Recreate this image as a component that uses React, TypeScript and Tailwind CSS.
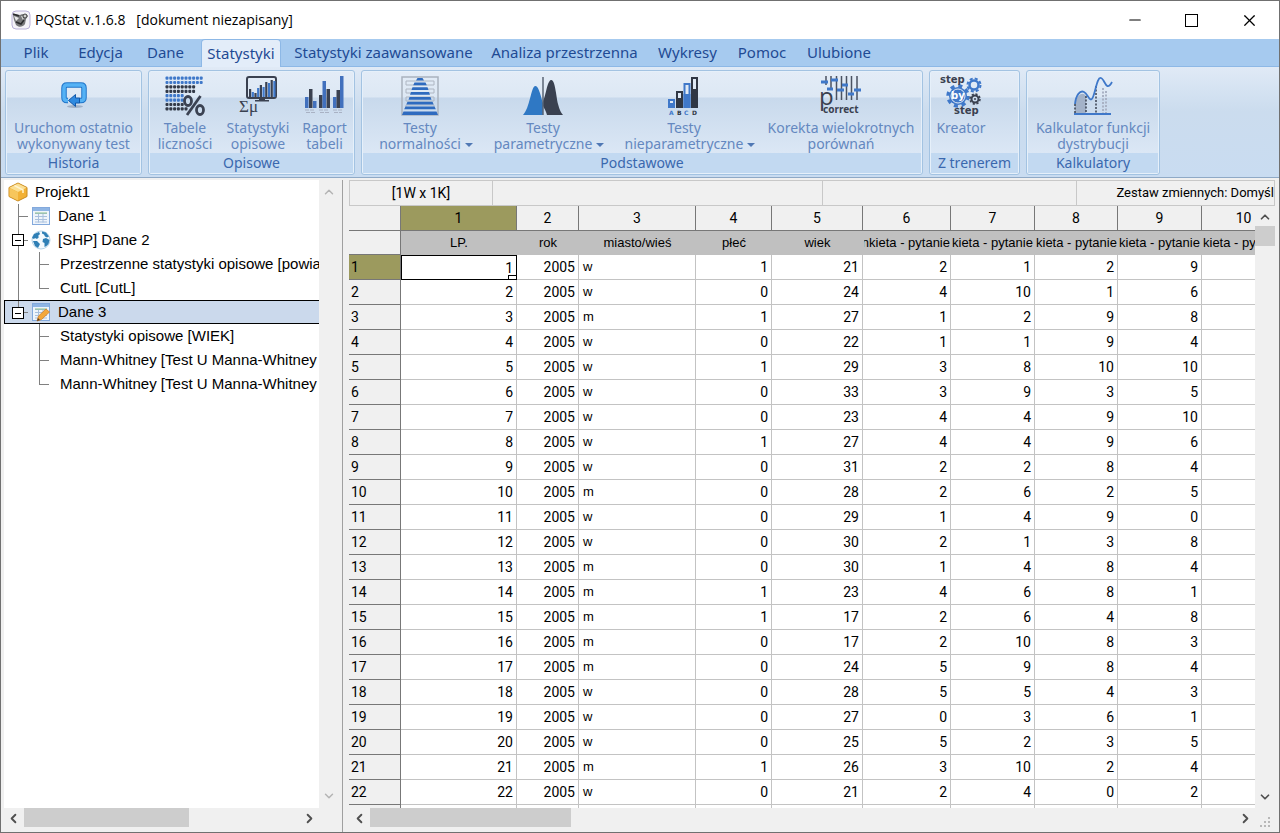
import { Fragment, type ReactNode } from 'react'
import { ChevronDown, ChevronLeft, ChevronRight, ChevronUp, Minus, X } from 'lucide-react'

const tabs = [
  { label: 'Plik', width: 'min-w-16' },
  { label: 'Edycja', width: 'min-w-[65px]' },
  { label: 'Dane', width: 'min-w-[65px]' },
  { label: 'Statystyki', width: 'min-w-20' },
  { label: 'Statystyki zaawansowane', width: 'min-w-[197px]' },
  { label: 'Analiza przestrzenna', width: 'min-w-[165px]' },
  { label: 'Wykresy', width: 'min-w-[81px]' },
  { label: 'Pomoc', width: 'min-w-[68px]' },
  { label: 'Ulubione', width: 'min-w-[86px]' },
]

const names = ['LP.', 'rok', 'miasto/wieś', 'płeć', 'wiek', 'nkieta - pytanie', 'kieta - pytanie', 'kieta - pytanie', 'kieta - pytanie', 'kieta - pytanie']

// miasto/wieś, płeć, wiek, pytania 1-4
const data: [string, number, number, number, number, number, number][] = [
  ['w', 1, 21, 2, 1, 2, 9],
  ['w', 0, 24, 4, 10, 1, 6],
  ['m', 1, 27, 1, 2, 9, 8],
  ['w', 0, 22, 1, 1, 9, 4],
  ['w', 1, 29, 3, 8, 10, 10],
  ['w', 0, 33, 3, 9, 3, 5],
  ['w', 0, 23, 4, 4, 9, 10],
  ['w', 1, 27, 4, 4, 9, 6],
  ['w', 0, 31, 2, 2, 8, 4],
  ['m', 0, 28, 2, 6, 2, 5],
  ['w', 0, 29, 1, 4, 9, 0],
  ['w', 0, 30, 2, 1, 3, 8],
  ['m', 0, 30, 1, 4, 8, 4],
  ['m', 1, 23, 4, 6, 8, 1],
  ['m', 1, 17, 2, 6, 4, 8],
  ['m', 0, 17, 2, 10, 8, 3],
  ['m', 0, 24, 5, 9, 8, 4],
  ['w', 0, 28, 5, 5, 4, 3],
  ['w', 0, 27, 0, 3, 6, 1],
  ['w', 0, 25, 5, 2, 3, 5],
  ['m', 1, 26, 3, 10, 2, 4],
  ['w', 0, 21, 2, 4, 0, 2],
]

/* ---------- icons ---------- */

function AppIcon() {
  return (
    <svg width="20" height="20" viewBox="0 0 20 20">
      <rect x="1" y="1" width="18" height="18" rx="4" fill="#f4f2f8" stroke="#b9b0d8" />
      <path d="M2 5c3-2 5 0 7 0 3-2 6-1 8 1l-2 3-1 5c-2 3-6 4-9 1L3 10z" fill="#77777a" />
      <path d="M3 6l5 2-3 3zM10 6l4 1-2 3z" fill="#e8e8e8" />
      <path d="M2 4l6 2M5 12l5 2 3-4M12 8l4-3" stroke="#2b2b2e" strokeWidth="1.5" fill="none" />
      <circle cx="14" cy="6" r="2" fill="#cfcfcf" stroke="#444" />
    </svg>
  )
}

function RepeatIcon() {
  return (
    <svg width="40" height="40" viewBox="0 0 40 40">
      <ellipse cx="21" cy="30.500" rx="8" ry="1.500" fill="#9fb0c6" />
      <path d="M14 24.500h-1q-3 0-3-3V12q0-3 3-3h14q3 0 3 3v9.500q0 3-3 3h-2" fill="none" stroke="#1f74c9" strokeWidth="5.500" />
      <path d="M14 24.500h-1q-3 0-3-3V12q0-3 3-3h14q3 0 3 3v9.500q0 3-3 3h-2" fill="none" stroke="#55b2f5" strokeWidth="3.500" />
      <path d="M14.500 24.500l7-6v3.500h4v5h-4v3.500z" fill="#2f8ae0" stroke="#1258aa" />
    </svg>
  )
}

function FrequencyIcon() {
  const rows = [
    [0, 10, '#3f78c9'], [1, 10, '#3f78c9'], [2, 8, '#333a48'], [3, 8, '#333a48'],
    [4, 5, '#3f78c9'], [5, 5, '#3f78c9'], [6, 5, '#333a48'], [7, 6, '#333a48'],
  ] as const
  return (
    <svg width="40" height="40" viewBox="0 0 40 40">
      {rows.map(([r, n, color]) =>
        Array.from({ length: n }, (_, i) => (
          <rect key={`${r}-${i}`} x={i * 3.8 + 0.5} y={r * 4.4 + 0.5} width="3" height="3.200" rx="1" fill={color} />
        )),
      )}
      <g fill="none" stroke="#3b4252" strokeWidth="2.800">
        <ellipse cx="23" cy="25" rx="3.500" ry="4.500" />
        <ellipse cx="35" cy="34" rx="3.500" ry="4.500" />
        <path d="M35.500 20L22 39" />
      </g>
    </svg>
  )
}

function DescriptiveIcon() {
  return (
    <svg width="40" height="40" viewBox="0 0 40 40">
      <rect x="9" y="1" width="29" height="21" rx="2" fill="none" stroke="#3a4150" strokeWidth="2" />
      {[8, 5, 4, 9, 12, 10, 15, 14, 17, 16].map((h, i) => (
        <rect key={i} x={11 + i * 2.7} y={21 - h} width="2.200" height={h} fill={i % 2 ? '#3f78c9' : '#3a4150'} />
      ))}
      <path d="M21 22h6v2h4v1.500H17V24h4z" fill="#3a4150" />
      <text x="1" y="36" fontFamily="Liberation Serif, serif" fontSize="17" fill="#3a4150">Σμ</text>
    </svg>
  )
}

function ReportIcon() {
  const bars = [[0, 11, 1], [4, 19, 0], [8, 7, 1], [14, 13, 0], [17.5, 27, 1], [21.5, 19, 0], [28, 11, 1], [31.5, 18, 0], [35, 32, 1]]
  return (
    <svg width="40" height="40" viewBox="0 0 40 40">
      {bars.map(([x, h, blue]) => (
        <rect key={x} x={x} y={32 - h} width="3.500" height={h} fill={blue ? '#4170bd' : '#3a4150'} />
      ))}
      <path d="M0 34h10M14 34h10M28 34h10M1 36.500h10M15 36.500h9M29 36.500h8" stroke="#a9b2c4" strokeDasharray="4 1" />
    </svg>
  )
}

function NormalityIcon() {
  return (
    <svg width="40" height="40" viewBox="0 0 40 40">
      <rect x="2" y="1" width="36" height="38" fill="none" stroke="#a9b2be" strokeWidth="1.500" />
      <path d="M6 5h28v4H6zM6 13h28v4H6zM6 21h28v4H6zM6 29h28v3H6z" fill="none" stroke="#aeb6c2" />
      <g fill="#2f6bbf">
        <path d="M17.500 2h5l1.500 2.500h-8zM14.500 6.500h11l1.300 2.800H13.200zM12.500 11.200h15l1 2.800H11.500zM11 16h18l1 2.800H10zM9.500 21h21l1 2.800H8.500zM7.500 25.700h25l1.200 2.800H6.300zM5.500 30.500h29l1.300 2.800H4.200zM3.500 35.500h33l1.500 3.500H2z" />
      </g>
    </svg>
  )
}

function ParametricIcon() {
  return (
    <svg width="40" height="40" viewBox="0 0 40 40">
      <path d="M0 39C7 32 8 11 12 10s6 12 8 17v12z" fill="#2f78c4" />
      <path d="M20 25c3-5 4-20 8-21s5 15 7 24q2 8 5 11H24c-1-4-3-7-4-9z" fill="#3a4150" />
      <path d="M20 1v38" stroke="#5a6475" strokeWidth="1.500" />
    </svg>
  )
}

function NonparametricIcon() {
  return (
    <svg width="40" height="40" viewBox="0 0 40 40">
      <rect x="5" y="24" width="5" height="7" fill="#dfe9f5" stroke="#3f78c9" strokeWidth="2" />
      <path d="M4 27h7v5H4z" fill="#3f78c9" />
      <rect x="13" y="16" width="5" height="15" fill="#dfe9f5" stroke="#303744" strokeWidth="2" />
      <path d="M12 22h7v10h-7z" fill="#303744" />
      <rect x="20.500" y="8" width="5" height="23" fill="#dfe9f5" stroke="#3f78c9" strokeWidth="2" />
      <path d="M19.500 18h7v14h-7z" fill="#3f78c9" />
      <rect x="28" y="2" width="5" height="29" fill="#dfe9f5" stroke="#303744" strokeWidth="2" />
      <path d="M27 13h7v19h-7z" fill="#303744" />
      <g fontFamily="DejaVu Sans, sans-serif" fontSize="6" fontWeight="bold">
        <text x="5" y="38.500" fill="#3f78c9">A</text>
        <text x="13" y="38.500" fill="#303744">B</text>
        <text x="20" y="38.500" fill="#3f78c9">C</text>
        <text x="28" y="38.500" fill="#303744">D</text>
      </g>
    </svg>
  )
}

function CorrectIcon() {
  return (
    <svg width="42" height="40" viewBox="0 0 42 40">
      <path d="M6 0v9M11 0v14M16.500 0v24M21.500 0v24M26.500 0v24M31.500 0v24M37 0v24" stroke="#4a5262" strokeWidth="1.500" />
      <path d="M1 6h7M7 13h6M11 4h7M17 14h7M22 9h6M28 18h6M34 14h7" stroke="#3f78c9" strokeWidth="3" />
      <text x="-1" y="29" fontFamily="Open Sans, sans-serif" fontSize="24" fill="#3a4150">p</text>
      <text x="3" y="37" fontFamily="Noto Sans, sans-serif" fontSize="10" fontWeight="bold" fill="#3a4150">correct</text>
    </svg>
  )
}

function StepIcon() {
  return (
    <svg width="46" height="42" viewBox="0 0 46 42">
      <g fill="none">
        <circle cx="20" cy="21" r="10" stroke="#3f78c9" strokeWidth="3.500" strokeDasharray="4 3.850" />
        <circle cx="20" cy="21" r="9" fill="#3f78c9" />
        <circle cx="20" cy="21" r="7" stroke="#dfe9f5" />
        <circle cx="36" cy="10" r="6.500" stroke="#3f78c9" strokeWidth="2" strokeDasharray="3 2.100" />
        <circle cx="36" cy="10" r="4.500" stroke="#3f78c9" strokeWidth="2.500" />
        <circle cx="37" cy="24" r="5" stroke="#3a4150" strokeWidth="1.500" strokeDasharray="2.200 1.700" />
        <circle cx="37" cy="24" r="3.500" stroke="#3a4150" strokeWidth="2" />
        <circle cx="37" cy="24" r="1" fill="#3a4150" />
      </g>
      <g fontFamily="DejaVu Sans, sans-serif" fontWeight="bold">
        <text x="2" y="8" fontSize="10" fill="#3a4150">step</text>
        <text x="13" y="24" fontSize="10" fill="#ffffff">by</text>
        <text x="16" y="39" fontSize="10" fill="#3a4150">step</text>
      </g>
    </svg>
  )
}

function DistributionIcon() {
  return (
    <svg width="40" height="40" viewBox="0 0 40 40">
      <path d="M2 37V26q4-10 9-8l2 2v17z" fill="#a3b2c8" />
      <path d="M2 28v9M13 20v17M23 10v27" stroke="#3a4150" strokeWidth="1.500" strokeDasharray="2 1.500" />
      <path d="M30 12v25M33 15v22" stroke="#a9b2c4" strokeWidth="2" strokeDasharray="2 1.500" />
      <path d="M2 28C3 19 7 14 11 16s6 12 9 5 4-20 8-19 5 15 11 4" fill="none" stroke="#3f78c9" strokeWidth="1.800" />
      <path d="M1 38h37" stroke="#3f78c9" strokeWidth="2" />
    </svg>
  )
}

function BoxIcon() {
  return (
    <svg width="20" height="20" viewBox="0 0 20 20">
      <path d="M10 1l9 4.500v9L10 19l-9-4.500v-9z" fill="#f2b136" stroke="#c98a1e" />
      <path d="M10 1.500l8.500 4.200L10 10 1.500 5.700z" fill="#fbdf93" />
      <path d="M1.500 6L10 10.200V18.500L1.500 14.200z" fill="#f7c65c" />
      <path d="M6.500 3.500L15 8v3" stroke="#fff3cd" strokeWidth="1.500" fill="none" />
    </svg>
  )
}

function SheetIcon({ pencil }: { pencil?: boolean }) {
  return (
    <svg width="18" height="20" viewBox="0 0 18 20">
      <rect x=".5" y="1.500" width="17" height="17" fill="#eef4fb" stroke="#83a9dc" />
      <path d="M1 2h16v3H1z" fill="#8fb5e4" />
      <path d="M3 7.500h12M3 10.500h12M3 13.500h12M3 16h12M6.500 7v9.500M11 7v9.500" stroke="#a9c0dd" />
      <path d="M3 7h12" stroke="#8cc08a" />
      {pencil && (
        <>
          <path d="M5 19l1.500-5L14 7l3.500 3-8 7.500z" fill="#f3a73b" stroke="#cf7f2b" strokeWidth=".8" />
          <path d="M5 19l1-3 2 2z" fill="#5b4430" />
        </>
      )}
    </svg>
  )
}

function GlobeIcon() {
  return (
    <svg width="20" height="20" viewBox="0 0 20 20">
      <circle cx="10" cy="10" r="9" fill="#f3f9fd" stroke="#b5d3e8" />
      <path d="M3 4l5-2 1 2-2 2 1 1-2 2-2-1-1 1-2-1zM11 1.500l4 1 3 4-2 1-2-1-1-2-2-1zM12 9l3-1 3.500 2-1 4-2 2-2 1v-4l-2-1zM2 11l4 0 3 3-1 2-1 2-3-2z" fill="#2f7fb5" />
    </svg>
  )
}

/* ---------- ribbon ---------- */

function Group({ label, className, children }: { label: string; className: string; children: ReactNode }) {
  return (
    <section className={`flex h-[105px] shrink-0 flex-col rounded-[3px] border border-[#a3c3e2] bg-[linear-gradient(#e3ecf7_0,#dde8f4_26px,#c8d9ec_27px,#dbe7f5_82px)] shadow-[inset_0_0_0_1px_#e6f0fa] ${className}`}>
      <div className="flex flex-1">{children}</div>
      <h2 className="m-px h-5 bg-[#c2d9f1] text-center leading-5 text-[#3a68ae]">{label}</h2>
    </section>
  )
}

function Tool({ icon, lines, menu, className }: { icon: ReactNode; lines: string[]; menu?: boolean; className: string }) {
  return (
    <button type="button" className={`flex flex-col items-center pt-[5px] leading-4 whitespace-nowrap text-[#6488c0] ${className}`}>
      <span className="mb-1 flex h-10 items-center justify-center">{icon}</span>
      <span>
        {lines.map((line, i) => (
          <Fragment key={line}>
            {i > 0 && <br />}
            {line}
          </Fragment>
        ))}
        {menu && <span className="-mr-3 ml-1 inline-block border-x-4 border-t-4 border-x-transparent border-t-[#5078b4] align-middle" />}
      </span>
    </button>
  )
}

function Ribbon() {
  return (
    <div className="flex h-[111px] gap-[6px] border-b border-[#8fa9c6] bg-[linear-gradient(#e0eaf6,#cbdcee_40%,#c9dcf1)] px-1 pt-[3px] text-sm">
      <Group label="Historia" className="w-[137px]">
        <Tool icon={<RepeatIcon />} lines={['Uruchom ostatnio', 'wykonywany test']} className="w-full" />
      </Group>
      <Group label="Opisowe" className="w-[207px]">
        <Tool icon={<FrequencyIcon />} lines={['Tabele', 'liczności']} className="w-[72px]" />
        <Tool icon={<DescriptiveIcon />} lines={['Statystyki', 'opisowe']} className="w-[74px]" />
        <Tool icon={<ReportIcon />} lines={['Raport', 'tabeli']} className="w-[59px]" />
      </Group>
      <Group label="Podstawowe" className="w-[562px]">
        <Tool icon={<NormalityIcon />} lines={['Testy', 'normalności']} menu className="w-[116px]" />
        <Tool icon={<ParametricIcon />} lines={['Testy', 'parametryczne']} menu className="w-[130px]" />
        <Tool icon={<NonparametricIcon />} lines={['Testy', 'nieparametryczne']} menu className="w-[152px]" />
        <Tool icon={<CorrectIcon />} lines={['Korekta wielokrotnych', 'porównań']} className="w-[162px]" />
      </Group>
      <Group label="Z trenerem" className="w-[91px]">
        <Tool icon={<StepIcon />} lines={['Kreator']} className="w-[62px]" />
      </Group>
      <Group label="Kalkulatory" className="w-[134px]">
        <Tool icon={<DistributionIcon />} lines={['Kalkulator funkcji', 'dystrybucji']} className="w-full" />
      </Group>
    </div>
  )
}

/* ---------- project tree ---------- */

// Connector: vertical line with an optional branch to the right
function Guide({ branch, last, box }: { branch?: boolean; last?: boolean; box?: boolean }) {
  return (
    <span className="relative flex w-[10px] shrink-0 flex-col self-stretch">
      <span className={`flex-1 border-l border-[#808080] ${branch ? 'border-b' : ''}`} />
      <span className={`flex-1 ${last ? '' : 'border-l border-[#808080]'}`} />
      {box && (
        <button type="button" aria-label="Zwiń" className="absolute top-[6px] -left-[6px] flex size-3 items-center justify-center border border-black bg-white">
          <span className="h-px w-[6px] bg-black" />
        </button>
      )}
    </span>
  )
}

function Leaf({ text, last, outer }: { text: string; last?: boolean; outer?: boolean }) {
  return (
    <li className="flex h-6 items-center whitespace-nowrap">
      <span className={`ml-[14px] w-[21px] shrink-0 self-stretch ${outer ? 'border-l border-[#808080]' : ''}`} />
      <Guide branch last={last} />
      <span className="pl-[11px]">{text}</span>
    </li>
  )
}

function Tree() {
  return (
    <ul className="min-w-0 flex-1 overflow-hidden bg-white text-[15px] text-black">
      <li className="flex h-6 items-center gap-[7px] pl-1">
        <BoxIcon />
        Projekt1
      </li>
      <li className="flex h-6 items-center pl-[14px]">
        <Guide branch />
        <span className="mr-2 ml-1"><SheetIcon /></span>
        Dane 1
      </li>
      <li className="flex h-6 items-center pl-[14px]">
        <Guide branch box />
        <span className="mr-[7px] ml-[3px]"><GlobeIcon /></span>
        [SHP] Dane 2
      </li>
      <Leaf text="Przestrzenne statystyki opisowe [powia" outer />
      <Leaf text="CutL [CutL]" last outer />
      <li className="flex h-6 items-center border-y border-l border-black bg-[#cbd9ec] pl-[13px]">
        <Guide branch last box />
        <span className="mr-2 ml-1"><SheetIcon pencil /></span>
        Dane 3
      </li>
      <Leaf text="Statystyki opisowe [WIEK]" />
      <Leaf text="Mann-Whitney [Test U Manna-Whitney" />
      <Leaf text="Mann-Whitney [Test U Manna-Whitney" last />
    </ul>
  )
}

function HScroll({ thumb, className }: { thumb: string; className: string }) {
  return (
    <div className={`flex h-5 items-center bg-[#f0f0f0] text-[#505050] ${className}`}>
      <button type="button" aria-label="W lewo" className="flex w-[21px] justify-center"><ChevronLeft size={15} strokeWidth={3} /></button>
      <div className="h-full flex-1"><div className={`h-[19px] bg-[#cdcdcd] ${thumb}`} /></div>
      <button type="button" aria-label="W prawo" className="flex w-5 justify-center"><ChevronRight size={15} strokeWidth={3} /></button>
    </div>
  )
}

/* ---------- data grid ---------- */

function Grid() {
  const cell = 'border-r border-b border-[#c3c3c3] bg-white px-[3px] text-right'
  const rowHead = 'border-r border-b border-[#777777] bg-[#f0f0f0] pl-[2px] text-left align-top leading-6 font-normal'
  return (
    <div className="min-h-0 min-w-0 flex-1 overflow-hidden bg-white">
      <table className="w-[937px] table-fixed border-separate border-spacing-0 text-sm text-black">
        <colgroup>
          <col className="w-[52px]" />
          <col className="w-[116px]" />
          <col className="w-[62px]" />
          <col className="w-[117px]" />
          <col className="w-[76px]" />
          <col className="w-[91px]" />
          <col className="w-[88px]" />
          <col className="w-[84px]" />
          <col className="w-[83px]" />
          <col className="w-[84px]" />
          <col className="w-[84px]" />
        </colgroup>
        <thead>
          <tr className="h-[25px]">
            <td className="border-r border-b border-[#777777] bg-[#f0f0f0]" />
            {names.map((_, i) => (
              <th key={i} scope="col" className={`border-r border-b border-[#777777] font-normal ${i === 0 ? 'bg-[#9c9a5e]' : 'bg-[#f0f0f0]'}`}>
                {i + 1}
              </th>
            ))}
          </tr>
          <tr className="h-6 font-['Liberation_Sans',Arial,sans-serif] text-[13px]">
            <td className="border-r border-b border-[#777777] bg-[#f0f0f0]" />
            {names.map((name, i) => (
              <th key={i} scope="col" className="bg-[#c0c0c0] px-px font-normal">
                <div className={`flex overflow-hidden whitespace-nowrap ${i < 5 ? 'justify-center' : i === 5 ? 'justify-end' : ''}`}>{name}</div>
              </th>
            ))}
          </tr>
        </thead>
        <tbody>
          {data.map(([place, ...values], r) => (
            <tr key={r} className="h-[25px]">
              <th scope="row" className={`${rowHead} ${r === 0 ? 'bg-[#9c9a5e]!' : ''}`}>{r + 1}</th>
              {r === 0 ? (
                <td className="relative border border-black bg-white px-[3px] text-right">
                  1
                  <span className="absolute right-0 bottom-0 h-1 w-2 border-t border-l border-black bg-white" />
                </td>
              ) : (
                <td className={cell}>{r + 1}</td>
              )}
              <td className={cell}>2005</td>
              <td className="border-r border-b border-[#c3c3c3] bg-white px-1 text-left font-['Liberation_Sans',Arial,sans-serif] text-[13px]">{place}</td>
              {values.map((v, c) => <td key={c} className={cell}>{v}</td>)}
              <td className={cell} />
            </tr>
          ))}
          <tr className="h-[25px]">
            <th scope="row" className={rowHead} />
            {names.map((_, i) => <td key={i} className={cell} />)}
          </tr>
        </tbody>
      </table>
    </div>
  )
}

export default function App() {
  return (
    <div className="flex h-screen flex-col overflow-hidden border border-[#707070] bg-[#f0f0f0] font-['Liberation_Sans',Arial,sans-serif]">
      <header className="flex h-[38px] shrink-0 items-center bg-white pl-[10px] font-['Open_Sans','Noto_Sans',sans-serif] text-black">
        <AppIcon />
        <h1 className="ml-1 flex-1 text-sm whitespace-pre">PQStat v.1.6.8   [dokument niezapisany]</h1>
        <button type="button" aria-label="Minimalizuj" className="flex w-[57px] justify-center"><Minus size={18} strokeWidth={1.5} /></button>
        <button type="button" aria-label="Maksymalizuj" className="flex w-[57px] justify-center">
          <svg width="13" height="13" viewBox="0 0 13 13">
            <rect x=".5" y=".5" width="12" height="12" fill="none" stroke="currentColor" />
          </svg>
        </button>
        <button type="button" aria-label="Zamknij" className="flex w-[59px] justify-center"><X size={19} strokeWidth={1.5} /></button>
      </header>

      <div className="shrink-0 font-['Noto_Sans','Open_Sans',sans-serif]">
        <nav className="flex h-7 items-end border-b border-[#8db8e6] bg-[#a6caef] pl-[3px] text-[15px] whitespace-nowrap text-[#1f4a94]">
          {tabs.map(({ label, width }) => (
            <button
              key={label}
              type="button"
              className={`${width} ${
                label === 'Statystyki'
                  ? 'mr-1 ml-[3px] -mb-px h-[28px] rounded-t border border-b-0 border-[#8db8e6] bg-[#e3edf9]'
                  : 'h-[27px]'
              }`}
            >
              {label}
            </button>
          ))}
        </nav>
        <Ribbon />
      </div>

      <main className="flex min-h-0 flex-1 pt-[2px]">
        <aside className="ml-[2px] flex w-[340px] shrink-0 flex-col border-r border-[#a0a0a0]">
          <div className="flex min-h-0 flex-1 pl-px">
            <Tree />
            <div className="flex w-[23px] flex-col items-center justify-between bg-[#f0f0f0] py-[5px] pr-1 text-[#b4b4b4]">
              <button type="button" aria-label="W górę"><ChevronUp size={14} strokeWidth={2.5} /></button>
              <button type="button" aria-label="W dół"><ChevronDown size={14} strokeWidth={2.5} /></button>
            </div>
          </div>
          <HScroll thumb="w-[165px]" className="mr-[23px] mb-1" />
        </aside>

        <section className="ml-[6px] flex min-w-0 flex-1 flex-col pr-1 font-[Roboto,'Liberation_Sans',sans-serif]">
          <div className="flex h-[26px] shrink-0 border border-[#c8c8c8] text-sm leading-6 whitespace-nowrap text-black">
            <div className="w-[143px] border-r border-[#c8c8c8] text-center">[1W x 1K]</div>
            <div className="w-[330px] border-r border-[#c8c8c8]" />
            <div className="w-[254px] border-r border-[#c8c8c8]" />
            <div className="flex flex-1 justify-end overflow-hidden text-[13px]">Zestaw zmiennych: Domyśl</div>
          </div>
          <div className="flex min-h-0 flex-1">
            <Grid />
            <div className="flex w-5 flex-col items-center py-1 text-[#505050]">
              <button type="button" aria-label="W górę"><ChevronUp size={14} strokeWidth={3} /></button>
              <div className="w-full flex-1 pt-[2px]"><div className="h-5 bg-[#cdcdcd]" /></div>
              <button type="button" aria-label="W dół"><ChevronDown size={14} strokeWidth={3} /></button>
            </div>
          </div>
          <div className="mb-1 flex">
            <HScroll thumb="w-[201px]" className="flex-1" />
            <svg width="20" height="20" viewBox="0 0 20 20" fill="#b8b8b8">
              <path d="M13 9h2v2h-2zM9 13h2v2H9zM13 13h2v2h-2zM5 17h2v2H5zM9 17h2v2H9zM13 17h2v2h-2z" />
            </svg>
          </div>
        </section>
      </main>
    </div>
  )
}
